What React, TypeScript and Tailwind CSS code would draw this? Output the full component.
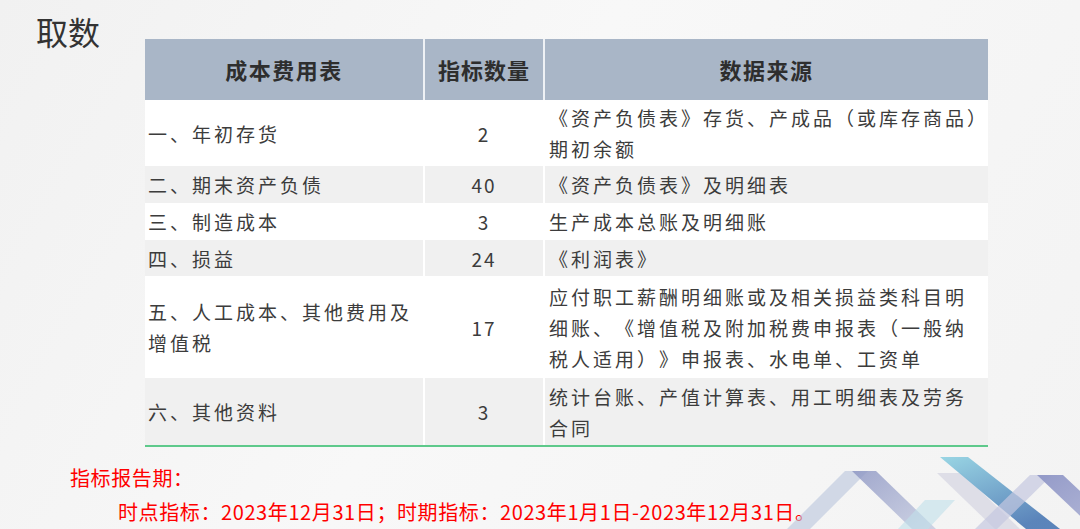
import React from "react"

const rows = [
  { name: "一、年初存货", num: "2", src: ["《资产负债表》存货、产成品（或库存商品）", "期初余额"], h: "h-[66px]", bg: "bg-white" },
  { name: "二、期末资产负债", num: "40", src: ["《资产负债表》及明细表"], h: "h-[37px]", bg: "bg-[#f0f0f0]" },
  { name: "三、制造成本", num: "3", src: ["生产成本总账及明细账"], h: "h-[37px]", bg: "bg-white" },
  { name: "四、损益", num: "24", src: ["《利润表》"], h: "h-[36px]", bg: "bg-[#f0f0f0]" },
  {
    name: "五、人工成本、其他费用及\n增值税",
    num: "17",
    src: ["应付职工薪酬明细账或及相关损益类科目明", "细账、《增值税及附加税费申报表（一般纳", "税人适用）》申报表、水电单、工资单"],
    h: "h-[102px]",
    bg: "bg-white",
  },
  { name: "六、其他资料", num: "3", src: ["统计台账、产值计算表、用工明细表及劳务", "合同"], h: "h-[67px]", bg: "bg-[#f0f0f0]" },
]

const Stripes = () => (
  <svg className="absolute left-[760px] top-[440px]" width="320" height="89" viewBox="760 440 320 89">
    <defs>
      <linearGradient id="cy" x1="0" y1="0" x2="0.6" y2="1">
        <stop offset="0" stopColor="#8fd2e2" />
        <stop offset="1" stopColor="#4a78b4" />
      </linearGradient>
      <linearGradient id="pu" x1="0" y1="0" x2="1" y2="1">
        <stop offset="0" stopColor="#8f96c6" />
        <stop offset="1" stopColor="#b3b8d8" />
      </linearGradient>
      <linearGradient id="la" x1="0" y1="0" x2="1" y2="1">
        <stop offset="0" stopColor="#8b94c2" />
        <stop offset="1" stopColor="#c5cbe0" />
      </linearGradient>
    </defs>
    {/* left roof */}
    <polygon points="845,471 868,471 810,529 787,529" fill="#b9c4dc" opacity="0.6" />
    <polygon points="852,471 876,471 936,529 912,529" fill="url(#la)" opacity="0.8" />
    <polygon points="925,500 955,500 928,529 898,529" fill="#bfe0ea" opacity="0.6" />
    {/* lavender band */}
    <polygon points="937,473 962,473 1020,529 995,529" fill="#dcdbe5" opacity="0.9" />
    {/* cyan band */}
    <polygon points="940,457 968,457 1060,529 1026,529" fill="url(#cy)" opacity="0.9" />
    {/* right roof */}
    <polygon points="1030,475 1052,475 997,529 975,529" fill="#c4c8df" opacity="0.7" />
    <polygon points="1037,475 1063,475 1120,529 1094,529" fill="url(#pu)" opacity="0.95" />
  </svg>
)

export default function App() {
  return (
    <div
      className="relative w-[1080px] h-[529px] overflow-hidden bg-[linear-gradient(120deg,#f1f1f1_0%,#f8f8f8_45%,#f3f3f3_100%)] [text-spacing-trim:space-all]"
      style={{ fontFamily: '"Noto Sans CJK SC", "Noto Sans", sans-serif' }}
    >
      <div className="h-[39px] pt-[17px] pl-[36px] text-[32px] leading-[28px] text-[#333333]">取数</div>

      <div className="ml-[145px] w-[843px]">
        <div className="grid grid-cols-[278px_118px_443px] gap-x-[2px] bg-[#eef1f5] h-[61px]">
          <div className="bg-[#a9b6c7] flex items-center justify-center text-[22px] font-bold tracking-[1.5px] text-[#2e2e2e]">成本费用表</div>
          <div className="bg-[#a9b6c7] flex items-center justify-center text-[22px] font-bold tracking-[1px] text-[#2e2e2e]">指标数量</div>
          <div className="bg-[#a9b6c7] flex items-center justify-center text-[22px] font-bold tracking-[1.5px] text-[#2e2e2e]">数据来源</div>
        </div>
        {rows.map((r) => (
          <div key={r.name} className={`grid grid-cols-[278px_118px_443px] gap-x-[2px] bg-white ${r.h} text-[19px] leading-[31px] tracking-[3px] text-[#3c3c3c]`}>
            <div className={`${r.bg} flex items-center pl-[3px] whitespace-pre-line`}>{r.name}</div>
            <div className={`${r.bg} flex items-center justify-center tracking-[2px]`}>{r.num}</div>
            <div className={`${r.bg} flex flex-col justify-center pl-[4px] whitespace-nowrap`}>
              {r.src.map((s) => (
                <div key={s}>{s}</div>
              ))}
            </div>
          </div>
        ))}
        <div className="h-[2px] bg-[#5ec98b]" />
      </div>

      <div className="mt-[16px] pl-[70px] text-[20px] leading-[30px] tracking-[0.6px] text-[#ff0000]">指标报告期：</div>
      <div className="mt-[4px] pl-[118px] text-[20px] leading-[30px] tracking-[0.6px] text-[#ff0000] whitespace-nowrap">
        时点指标：2023年12月31日；时期指标：2023年1月1日-2023年12月31日。
      </div>

      <Stripes />
    </div>
  )
}
